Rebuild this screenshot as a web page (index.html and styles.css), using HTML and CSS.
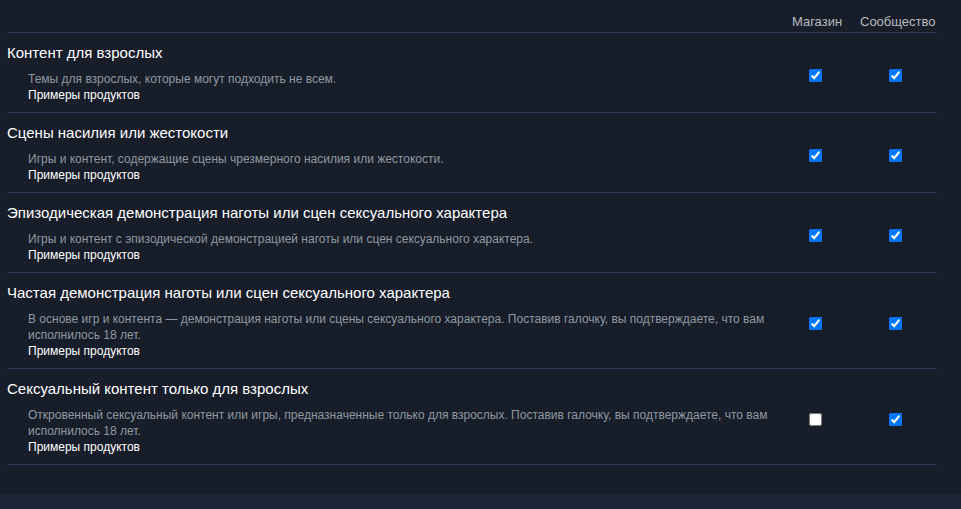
FILE: index.html
```html
<!DOCTYPE html>
<html lang="ru">
<head>
    <meta charset="UTF-8">
    <meta name="viewport" content="width=device-width, initial-scale=1.0">
    <title>Настройки контента</title>
    <link rel="stylesheet" href="styles.css">
</head>
<body>
    <div class="content_prefs">
        <div class="prefs_head">
            <span class="col_name">Магазин</span>
            <span class="col_name col_wide">Сообщество</span>
        </div>

        <div class="pref_row">
            <div class="pref_text">
                <div class="pref_title">Контент для взрослых</div>
                <div class="pref_desc">Темы для взрослых, которые могут подходить не всем.</div>
                <a class="pref_link" href="#">Примеры продуктов</a>
            </div>
            <div class="pref_check"><input type="checkbox" checked></div>
            <div class="pref_check col_wide"><input type="checkbox" checked></div>
        </div>

        <div class="pref_row">
            <div class="pref_text">
                <div class="pref_title">Сцены насилия или жестокости</div>
                <div class="pref_desc">Игры и контент, содержащие сцены чрезмерного насилия или жестокости.</div>
                <a class="pref_link" href="#">Примеры продуктов</a>
            </div>
            <div class="pref_check"><input type="checkbox" checked></div>
            <div class="pref_check col_wide"><input type="checkbox" checked></div>
        </div>

        <div class="pref_row">
            <div class="pref_text">
                <div class="pref_title">Эпизодическая демонстрация наготы или сцен сексуального характера</div>
                <div class="pref_desc">Игры и контент с эпизодической демонстрацией наготы или сцен сексуального характера.</div>
                <a class="pref_link" href="#">Примеры продуктов</a>
            </div>
            <div class="pref_check"><input type="checkbox" checked></div>
            <div class="pref_check col_wide"><input type="checkbox" checked></div>
        </div>

        <div class="pref_row">
            <div class="pref_text">
                <div class="pref_title">Частая демонстрация наготы или сцен сексуального характера</div>
                <div class="pref_desc">В основе игр и контента — демонстрация наготы или сцены сексуального характера. Поставив галочку, вы подтверждаете, что вам исполнилось 18 лет.</div>
                <a class="pref_link" href="#">Примеры продуктов</a>
            </div>
            <div class="pref_check"><input type="checkbox" checked></div>
            <div class="pref_check col_wide"><input type="checkbox" checked></div>
        </div>

        <div class="pref_row">
            <div class="pref_text">
                <div class="pref_title">Сексуальный контент только для взрослых</div>
                <div class="pref_desc">Откровенный сексуальный контент или игры, предназначенные только для взрослых. Поставив галочку, вы подтверждаете, что вам исполнилось 18 лет.</div>
                <a class="pref_link" href="#">Примеры продуктов</a>
            </div>
            <div class="pref_check"><input type="checkbox"></div>
            <div class="pref_check col_wide"><input type="checkbox" checked></div>
        </div>
    </div>
    <div class="page_bottom"></div>
</body>
</html>
```

FILE: styles.css
```css
* {
    box-sizing: border-box;
    margin: 0;
    padding: 0;
}
html, body {
    background-color: #171e2a;
}
body {
    font-family: Arial, "Liberation Sans", sans-serif;
    color: #dcdedf;
}
.content_prefs {
    width: 930px;
    margin-left: 7px;
    padding-bottom: 29px;
}
.prefs_head {
    display: flex;
    justify-content: flex-end;
    align-items: flex-end;
    height: 33px;
    padding-bottom: 3px;
    border-bottom: 1px solid #2b3d58;
}
.col_name {
    width: 66px;
    padding-right: 4px;
    text-align: center;
    font-size: 13px;
    color: #b8bcbf;
}
.col_name.col_wide {
    width: 85px;
    padding: 0 0 0 8px;
    text-align: left;
}
.pref_row {
    display: flex;
    align-items: center;
    padding: 10px 0 9px;
    border-bottom: 1px solid #2b3d58;
}
.pref_text {
    flex: 1;
}
.pref_title {
    font-size: 15px;
    line-height: 20px;
    color: #ffffff;
    margin-bottom: 8px;
}
.pref_desc {
    font-size: 12px;
    line-height: 16px;
    color: #8f98a0;
    margin-left: 21px;
    max-width: 760px;
}
.pref_link {
    display: block;
    font-size: 12px;
    line-height: 16px;
    color: #ffffff;
    text-decoration: none;
    margin-left: 21px;
}
.pref_check {
    width: 66px;
    padding-right: 8px;
    display: flex;
    justify-content: center;
    margin-top: 5px;
}
.pref_check.col_wide {
    width: 85px;
    justify-content: flex-start;
    padding: 0 0 0 37px;
}
.pref_check input {
    width: 13px;
    height: 13px;
    margin: 0;
}
.page_bottom {
    height: 40px;
    background-color: #1b2434;
}
```
